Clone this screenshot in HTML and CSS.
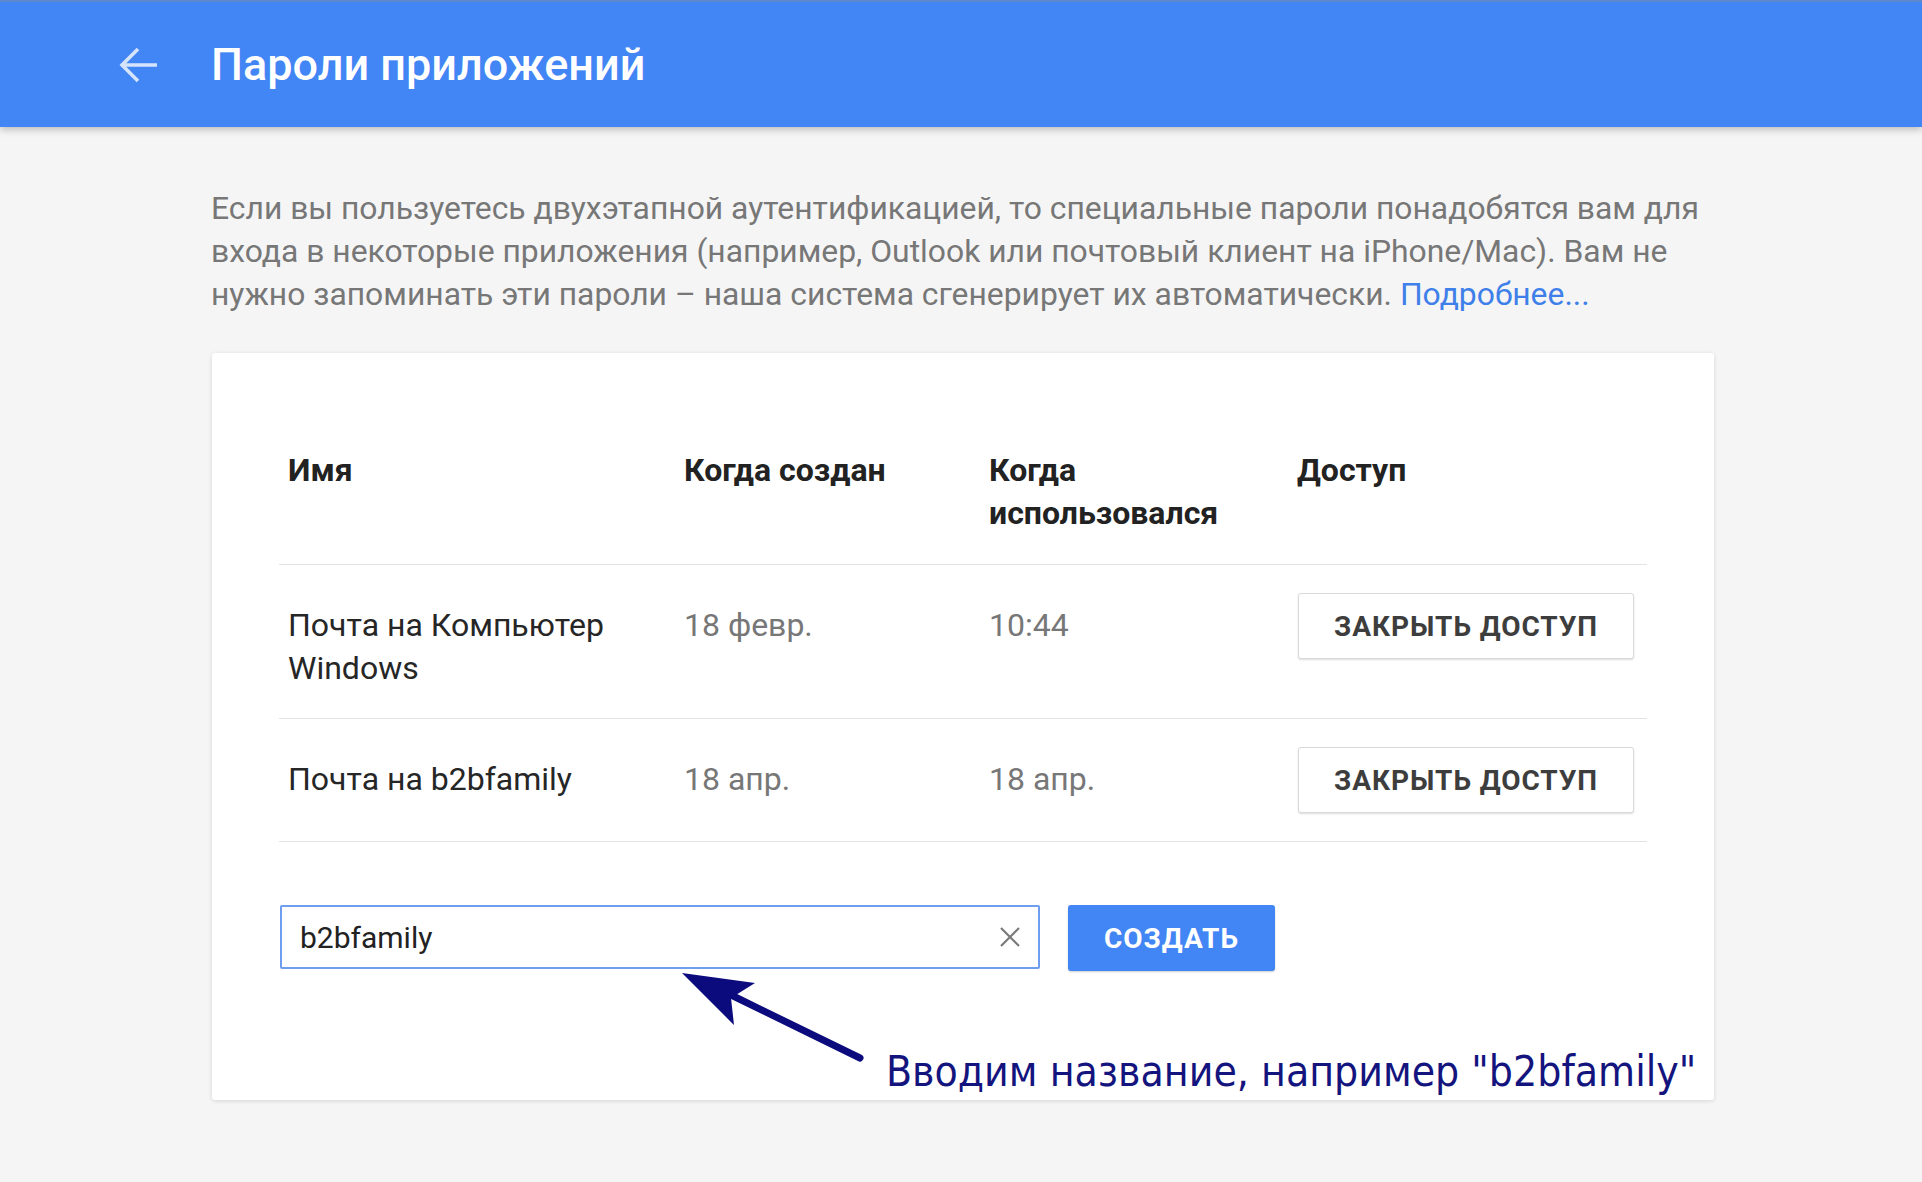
FILE: index.html
```html
<!DOCTYPE html>
<html lang="ru">
<head>
<meta charset="utf-8">
<title>Пароли приложений</title>
<link rel="stylesheet" href="styles.css">
</head>
<body>
<header class="topbar">
  <svg class="back" viewBox="0 0 40 38" width="40" height="38" aria-hidden="true">
    <path d="M39 19H4M20 3L4 19L20 35" fill="none" stroke="#ffffff" stroke-width="3.6" stroke-linecap="butt" stroke-linejoin="miter"/>
  </svg>
  <h1 class="title">Пароли приложений</h1>
</header>
<main class="content">
  <p class="intro">Если вы пользуетесь двухэтапной аутентификацией, то специальные пароли понадобятся вам для<br>входа в некоторые приложения (например, Outlook или почтовый клиент на iPhone/Mac). Вам не<br>нужно запоминать эти пароли – наша система сгенерирует их автоматически. <a class="more" href="#">Подробнее...</a></p>
  <section class="card">
    <div class="row head">
      <div class="cell">Имя</div>
      <div class="cell">Когда создан</div>
      <div class="cell">Когда использовался</div>
      <div class="cell">Доступ</div>
    </div>
    <div class="row item">
      <div class="cell name">Почта на Компьютер Windows</div>
      <div class="cell muted">18 февр.</div>
      <div class="cell muted">10:44</div>
      <div class="cell action"><button class="revoke">ЗАКРЫТЬ ДОСТУП</button></div>
    </div>
    <div class="row item">
      <div class="cell name">Почта на b2bfamily</div>
      <div class="cell muted">18 апр.</div>
      <div class="cell muted">18 апр.</div>
      <div class="cell action"><button class="revoke">ЗАКРЫТЬ ДОСТУП</button></div>
    </div>
    <div class="create">
      <div class="field">
        <span class="value">b2bfamily</span>
        <svg class="clear" viewBox="0 0 22 22" width="22" height="22" aria-hidden="true">
          <path d="M2 2L20 20M20 2L2 20" fill="none" stroke="#7a7a7a" stroke-width="2.2"/>
        </svg>
      </div>
      <button class="primary">СОЗДАТЬ</button>
    </div>
    <svg class="pointer" viewBox="0 0 1502 747" width="1502" height="747" aria-hidden="true">
      <path d="M648 705L515 640" fill="none" stroke="#0b0b7e" stroke-width="7" stroke-linecap="round"/>
      <path d="M470 620L543 630L519 645L522 672Z" fill="#0b0b7e"/>
    </svg>
    <div class="note">Вводим название, например "b2bfamily"</div>
  </section>
</main>
</body>
</html>
```

FILE: styles.css
```css
* { box-sizing: border-box; }

html, body {
  margin: 0;
  padding: 0;
}

body {
  background: #f5f5f5;
  font-family: Roboto, "Liberation Sans", Arial, sans-serif;
  color: #212121;
  width: 1922px;
  min-height: 1182px;
}

.topbar {
  height: 127px;
  background: #4285f4;
  border-top: 2px solid #5f88cc;
  box-shadow: 0 3px 7px rgba(0, 0, 0, 0.22);
  display: flex;
  align-items: center;
  padding-left: 118px;
  position: relative;
}

.back {
  opacity: 0.78;
  flex: none;
}

.title {
  margin: 0 0 0 53px;
  font-size: 45px;
  font-weight: 500;
  color: #ffffff;
  line-height: 1;
}

.content {
  padding: 60px 0 0 211px;
  width: 1714px;
}

.intro {
  margin: 0 0 37px 0;
  font-size: 31.85px;
  line-height: 43px;
  color: #777777;
  white-space: nowrap;
}

.more {
  color: #3f7fe9;
  text-decoration: none;
}

.card {
  position: relative;
  margin-left: 1px;
  width: 1502px;
  height: 747px;
  background: #ffffff;
  border-radius: 3px;
  box-shadow: 0 1px 4px rgba(0, 0, 0, 0.13);
  padding: 96px 67px 0 67px;
}

.row {
  display: grid;
  grid-template-columns: 396px 305px 308px 1fr;
  border-bottom: 1px solid #e3e3e3;
  font-size: 32px;
  line-height: 43px;
}

.row.head {
  font-weight: 700;
  color: #222222;
  padding-bottom: 29px;
}

.row.item {
  padding: 28px 0 28px 0;
  align-items: start;
}

.cell {
  padding: 0 9px;
}

.item .cell {
  padding-top: 11px;
}

.item .cell.action {
  padding-top: 0;
}

.name {
  color: #262626;
}

.muted {
  color: #777777;
}

.revoke {
  display: block;
  width: 336px;
  height: 66px;
  margin-left: 1px;
  background: #ffffff;
  border: 1px solid #dadada;
  border-radius: 3px;
  box-shadow: 0 1px 2px rgba(0, 0, 0, 0.14);
  font-family: Roboto, "Liberation Sans", Arial, sans-serif;
  font-size: 28px;
  font-weight: 700;
  color: #3d3d3d;
  letter-spacing: 0.95px;
  padding: 0;
}

.create {
  display: flex;
  align-items: flex-start;
  gap: 28px;
  margin-top: 63px;
  padding-left: 1px;
}

.field {
  width: 760px;
  height: 64px;
  border: 2px solid #6d9ef0;
  border-radius: 2px;
  display: flex;
  align-items: center;
  justify-content: space-between;
  padding: 0 17px 0 18px;
  background: #ffffff;
}

.value {
  font-size: 30px;
  color: #222222;
}

.clear {
  flex: none;
}

.primary {
  width: 207px;
  height: 66px;
  background: #4285f4;
  border: none;
  border-radius: 3px;
  box-shadow: 0 1px 2px rgba(0, 0, 0, 0.2);
  color: #ffffff;
  font-family: Roboto, "Liberation Sans", Arial, sans-serif;
  font-size: 28px;
  font-weight: 700;
  letter-spacing: 1px;
  padding: 0;
}

.pointer {
  position: absolute;
  left: 0;
  top: 0;
  pointer-events: none;
}

.note {
  position: absolute;
  left: 674px;
  top: 693px;
  font-family: "DejaVu Sans Condensed", "DejaVu Sans", Verdana, sans-serif;
  font-size: 42.3px;
  line-height: 52px;
  color: #14147e;
  white-space: nowrap;
}
```
